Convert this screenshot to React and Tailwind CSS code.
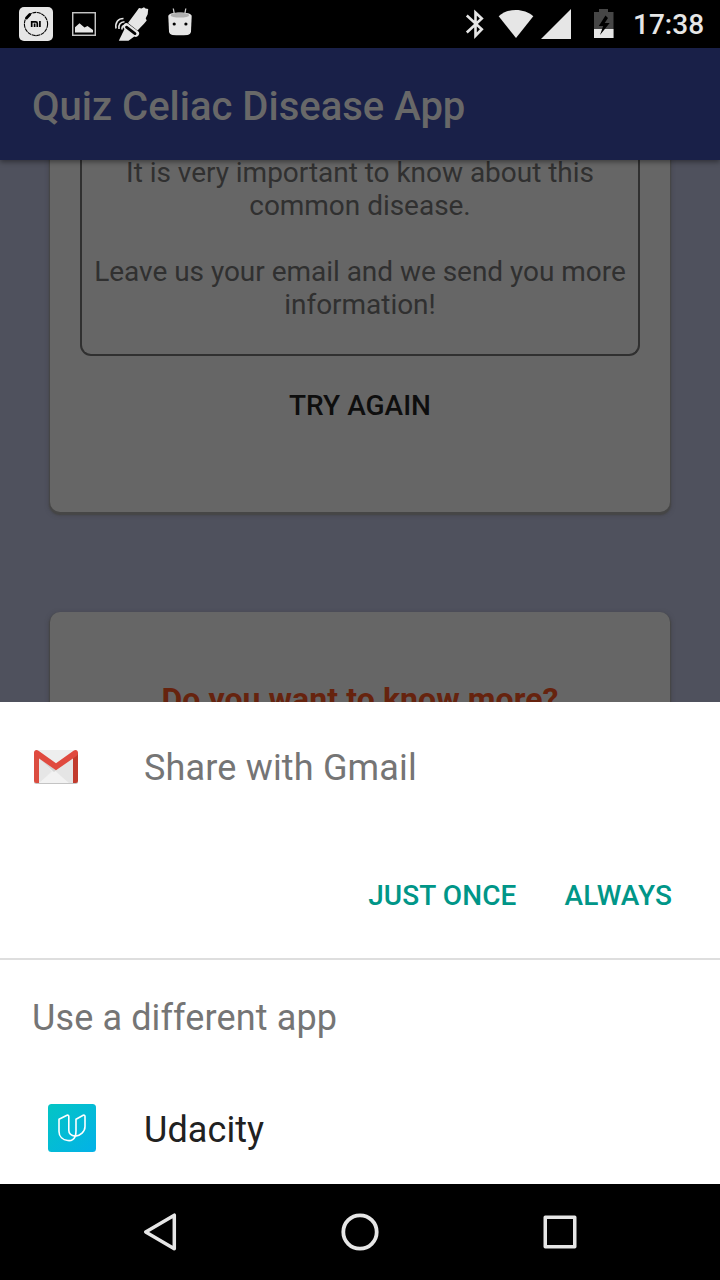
function MiIcon() {
  return (
    <svg className="absolute top-[7px] left-[19px]" width="34" height="34" viewBox="0 0 34 34">
      <rect width="34" height="34" rx="5" fill="#e6e6e6" />
      <circle cx="17" cy="17" r="11.600" fill="none" stroke="#000" strokeWidth="1.100" strokeDasharray="4 0.600" />
      <path d="M7 11.500 11.500 7" stroke="#e6e6e6" strokeWidth="6" />
      <path d="M7.500 11 10.800 7.500" stroke="#000" strokeWidth="2.800" strokeLinecap="round" />
      <path d="M12.700 20v-5.200h4q1.600 0 1.600 1.600V20M15.600 16.600V20M20.900 14.100V20" fill="none" stroke="#000" strokeWidth="1.700" />
    </svg>
  );
}

function PictureIcon() {
  return (
    <svg className="absolute top-3 left-[72px]" width="24" height="24" viewBox="0 0 24 24">
      <rect x="0.700" y="0.700" width="22.600" height="22.600" fill="none" stroke="#c4c4c4" strokeWidth="1.500" />
      <path d="M3 20.500v-5.200l4.500-4 5 4.300 3-1.600L21 18v2.500z" fill="#e6e6e6" />
    </svg>
  );
}

function CleanerIcon() {
  return (
    <svg className="absolute top-[6px] left-[114px]" width="36" height="36" viewBox="0 0 36 36">
      <path d="M14 17 22.500 5.500 25 2l2.500.6 2.500-1.400 1.500 1.400 2.700.5-.5 5.200-2 4 1 2.200-2.700 3.300L23.500 24.500z" fill="#e6e6e6" />
      <path d="m11 22 10 8-6.500 4.800H4.800z" fill="#e6e6e6" />
      <path d="m12.500 20.500 9.300 7" stroke="#e6e6e6" strokeWidth="6.500" strokeLinecap="round" />
      <path d="m12.500 21.200 8.500 6.400" stroke="#000" strokeWidth="2.800" strokeLinecap="round" />
      <path d="M2 22.500C1 16.500 4 12.500 9.500 12.500M5 23C4.300 18.500 6.500 16 10.500 15.800M8 23.500c-.3-2.500.8-4 3-4.300" fill="none" stroke="#e6e6e6" strokeWidth="1.600" />
    </svg>
  );
}

function DroidIcon() {
  return (
    <svg className="absolute top-[7px] left-[167px]" width="26" height="30" viewBox="0 0 26 30">
      <path d="m7.300 7-1-5.500M17.800 7l1-5.500" stroke="#c9c9c9" strokeWidth="1.300" />
      <path d="M1.300 9c0-4.600 23.400-4.600 23.400 0L24 24.500q-.3 3-3.500 3.400-7.500.9-15 0-3.200-.4-3.500-3.400z" fill="#e6e6e6" />
      <ellipse cx="12.900" cy="8.200" rx="9.300" ry="2.400" fill="#b0b0b0" />
      <circle cx="7.200" cy="17" r="1.600" fill="#000" />
      <circle cx="18.900" cy="17" r="1.600" fill="#000" />
    </svg>
  );
}

function StatusBar() {
  return (
    <header className="relative h-12 shrink-0 bg-black">
      <MiIcon />
      <PictureIcon />
      <CleanerIcon />
      <DroidIcon />
      <svg className="absolute top-2 left-[464px]" width="22" height="32" viewBox="0 0 22 32">
        <path d="m2.800 7.500 15 13.700-6.300 6.500V4.500l6.300 6L2.800 24.500" fill="none" stroke="#e6e6e6" strokeWidth="2.600" />
      </svg>
      <svg className="absolute top-[9px] left-[498px]" width="36" height="30" viewBox="0 0 36 30">
        <path d="M.7 7.200C10-1.200 26-1.200 35.300 7.200L18 29z" fill="#e6e6e6" />
      </svg>
      <svg className="absolute top-[9px] left-[541px]" width="31" height="31" viewBox="0 0 31 31">
        <path d="M0 30 30 0v30z" fill="#e6e6e6" />
      </svg>
      <svg className="absolute top-[9px] left-[594px]" width="20" height="30" viewBox="0 0 20 30">
        <path d="M0 3h5V0h9v3h5.500v26H0z" fill="#464646" />
        <path d="M0 20h19.500v9H0z" fill="#e6e6e6" />
        <path d="m11.500 6.500-6.700 10.500h4.400l-3.200 9L15.700 14h-5l3.300-5z" fill="#000" />
      </svg>
      <span className="absolute top-2 left-[633px] text-[28px] leading-[34px] font-medium text-[#e6e6e6]">17:38</span>
    </header>
  );
}

function GmailIcon() {
  return (
    <svg className="-mt-[5px]" width="48" height="48" viewBox="0 0 48 48">
      <rect x="2" y="9" width="44" height="33" rx="2.500" fill="#c4c4c4" />
      <rect x="2" y="8" width="44" height="33" rx="2.500" fill="#eeeeee" />
      <path d="M7 12.500 24 26l17-13.500V41H36z" fill="#e0e0e0" opacity=".65" />
      <path d="m7 41 15-12.500L37 41z" fill="#f2f2f2" />
      <path d="M7 13v28L19.500 29.500z" fill="#e6e6e6" />
      <path d="M7 16 24 28.300 22 30z" fill="#d4d4d4" />
      <path d="M2 10.500 7 13v28H4a2 2 0 0 1-2-2z" fill="#db4d40" />
      <path d="m41 13 5-2.500V39a2 2 0 0 1-2 2h-3z" fill="#c23b2d" />
      <path d="M2 11c0-3 2.500-3.700 4.500-2.300L24 21.300 41.500 8.700C43.500 7.300 46 8 46 11c0 1.200-.5 2.200-1.500 3L24 28.300 3.500 14C2.500 13.200 2 12.200 2 11z" fill="#e04a3f" />
    </svg>
  );
}

function UdacityIcon() {
  return (
    <svg width="48" height="48" viewBox="0 0 48 48">
      <defs>
        <linearGradient id="udacity-bg" x1="0" y1="0" x2="1" y2="1">
          <stop offset="0" stopColor="#04c5c4" />
          <stop offset="1" stopColor="#03b1e8" />
        </linearGradient>
      </defs>
      <rect width="48" height="48" rx="3.500" fill="url(#udacity-bg)" />
      <path
        d="M20.800 12.500v13.800c0 3 2 5.300 6.500 6-1.500 3-4.500 4.700-7.500 4.200-5-.5-8.800-3.700-8.800-9V15.200l8-3.900q1.800-.6 1.800 1.200zM27.300 32.300c5-.8 9.700-4.500 9.700-9.800V12.500q0-1.800-1.800-1.200l-7.200 3.900v11.300c0 2.500-.2 4-.7 5.800"
        fill="none"
        stroke="#fff"
        strokeWidth="1.600"
        strokeLinejoin="round"
      />
    </svg>
  );
}

function NavBar() {
  return (
    <nav className="flex h-24 shrink-0 items-center bg-black px-[60px]">
      <div className="flex w-[200px] justify-center">
        <svg width="40" height="40" viewBox="0 0 40 40" fill="none" stroke="#e6e6e6" strokeWidth="3.500" strokeLinejoin="round">
          <path d="M34.300 3.200v33.600L5.700 20z" />
        </svg>
      </div>
      <div className="flex w-[200px] justify-center">
        <svg width="40" height="40" viewBox="0 0 40 40" fill="none" stroke="#e6e6e6" strokeWidth="3.800">
          <circle cx="20" cy="20" r="16.700" />
        </svg>
      </div>
      <div className="flex w-[200px] justify-center">
        <svg width="40" height="40" viewBox="0 0 40 40" fill="none" stroke="#e6e6e6" strokeWidth="3.500" strokeLinejoin="round">
          <rect x="5.250" y="5.250" width="29.500" height="29.500" />
        </svg>
      </div>
    </nav>
  );
}

const cardShadow = "shadow-[0_2px_1px_1px_#464646,0_2px_4px_1px_rgba(60,60,64,0.6)]";

export default function App() {
  return (
    <div className="flex h-[1280px] w-[720px] flex-col overflow-hidden bg-[#4f515d] font-[Roboto,sans-serif]">
      <StatusBar />
      <div className="z-10 flex h-28 shrink-0 items-center bg-[#192048] px-8 pt-1.5 shadow-[0_2px_5px_rgba(0,0,0,0.4)]">
        <h1 className="text-[40px] leading-[48px] font-medium text-[#686868]">Quiz Celiac Disease App</h1>
      </div>
      <main className="flex h-[542px] shrink-0 flex-col gap-[100px] overflow-hidden px-[50px]">
        <section className={`-mt-10 flex h-[392px] shrink-0 flex-col rounded-[10px] bg-[#666] px-[30px] ${cardShadow}`}>
          <div className="h-[236px] rounded-b-[11px] border-2 border-t-0 border-[#303030] pt-9 text-center text-[28px] leading-[33px] tracking-[-0.03px] text-[#303030]">
            <p>
              It is very important to know about this
              <br />
              common disease.
            </p>
            <p className="mt-[33px] whitespace-nowrap">
              Leave us your email and we send you more
              <br />
              information!
            </p>
          </div>
          <button className="mt-[33px] text-[28px] leading-[33px] font-medium text-[#0e0e0e]">TRY AGAIN</button>
        </section>
        <section className={`h-[300px] shrink-0 rounded-[10px] bg-[#666] pt-[68px] text-center ${cardShadow}`}>
          <h2 className="text-[32px] leading-[38px] font-bold tracking-[0.07px] text-[#66230e]">Do you want to know more?</h2>
        </section>
      </main>
      <div className="z-10 flex h-[482px] shrink-0 flex-col bg-white">
        <div className="flex h-32 items-center gap-16 px-8 pt-1">
          <GmailIcon />
          <span className="text-[36px] leading-[42px] tracking-[0.17px] text-[#757575]">Share with Gmail</span>
        </div>
        <div className="flex h-32 items-center justify-end gap-12 px-12 pt-0.5 text-[28px] leading-[33px] font-medium tracking-[0.1px] text-[#009688]">
          <button>JUST ONCE</button>
          <button>ALWAYS</button>
        </div>
        <div className="h-0.5 bg-[#dedede]" />
        <div className="flex h-[116px] items-center px-8 text-[36px] leading-[42px] tracking-[0.12px] text-[#757575]">Use a different app</div>
        <div className="flex h-[108px] items-center gap-12 px-12 pb-1">
          <UdacityIcon />
          <span className="pt-1 text-[36px] leading-[42px] tracking-[0.08px] text-[#212121]">Udacity</span>
        </div>
      </div>
      <NavBar />
    </div>
  );
}
